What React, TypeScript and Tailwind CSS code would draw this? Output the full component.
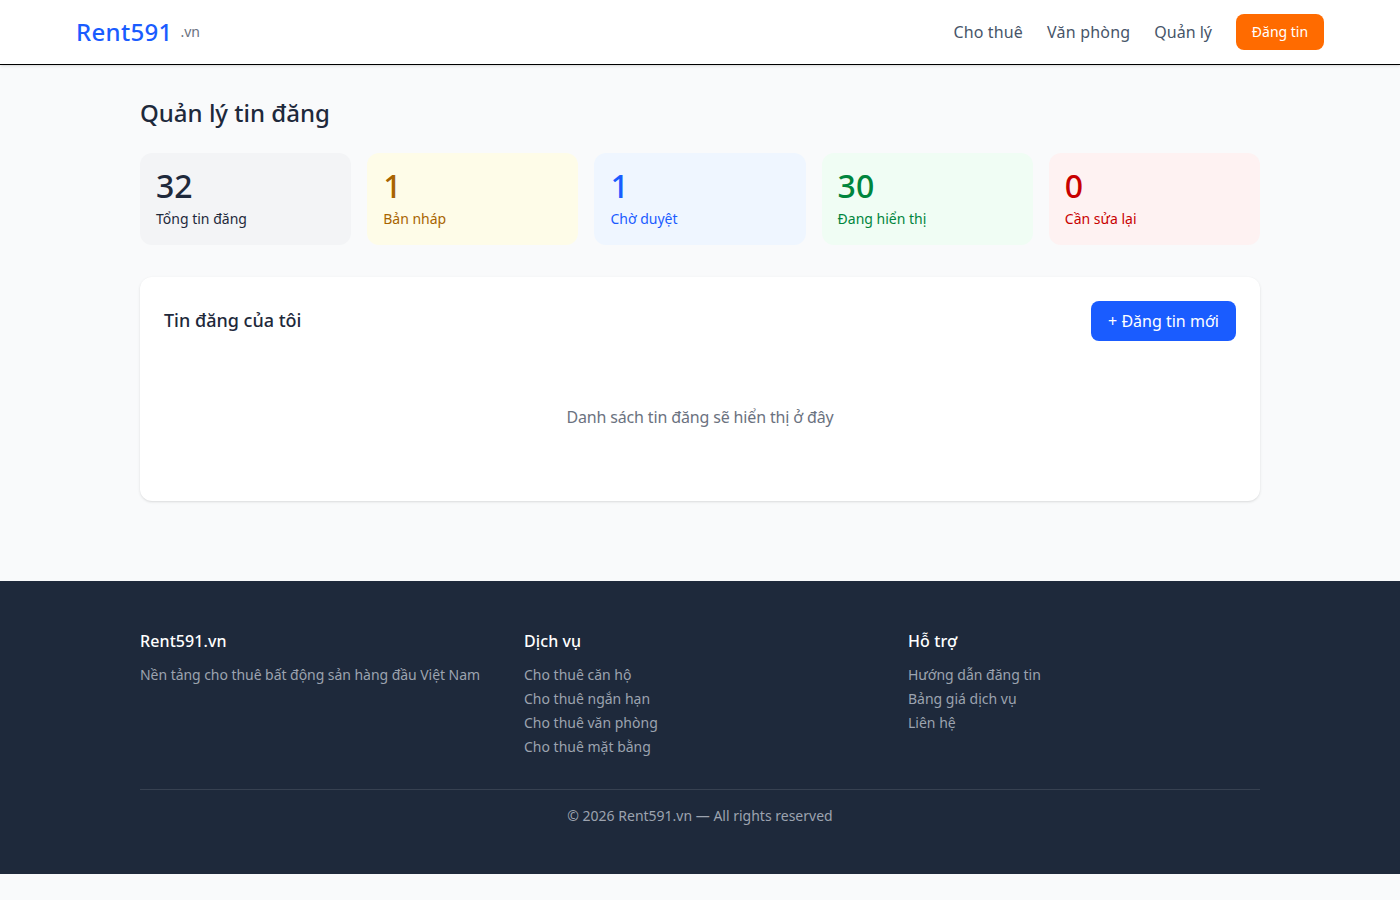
const stats = [
  { value: "32", label: "Tổng tin đăng", box: "bg-[#f3f4f6]", text: "text-[#1e293b]" },
  { value: "1", label: "Bản nháp", box: "bg-[#fefce8]", text: "text-[#a86400]" },
  { value: "1", label: "Chờ duyệt", box: "bg-[#eff6ff]", text: "text-[#1a5cff]" },
  { value: "30", label: "Đang hiển thị", box: "bg-[#f0fdf4]", text: "text-[#00853d]" },
  { value: "0", label: "Cần sửa lại", box: "bg-[#fef2f2]", text: "text-[#c80000]" },
]

const services = ["Cho thuê căn hộ", "Cho thuê ngắn hạn", "Cho thuê văn phòng", "Cho thuê mặt bằng"]
const support = ["Hướng dẫn đăng tin", "Bảng giá dịch vụ", "Liên hệ"]

export default function App() {
  return (
    <div className="min-h-screen bg-[#f9fafb] font-['Noto_Sans',sans-serif] text-[#1e293b]">
      {/* Header */}
      <header className="bg-white border-b border-black shadow-sm">
        <div className="max-w-[1280px] mx-auto h-16 px-4 flex items-center justify-between">
          <a className="flex items-center gap-2">
            <span className="text-2xl font-medium tracking-[0.3px] text-[#1a5cff]">Rent591</span>
            <span className="text-sm text-[#6b7280]">.vn</span>
          </a>
          <nav className="flex items-center gap-6">
            <a className="text-[#475569] tracking-[0.15px]">Cho thuê</a>
            <a className="text-[#475569] tracking-[0.2px]">Văn phòng</a>
            <a className="text-[#475569]">Quản lý</a>
            <a className="w-[88px] py-2 text-center rounded-lg bg-[#ff6b00] text-white text-sm">Đăng tin</a>
          </nav>
        </div>
      </header>

      {/* Content */}
      <main className="max-w-[1120px] mx-auto pt-8 pb-20">
        <h1 className="text-2xl font-medium mb-6">Quản lý tin đăng</h1>

        <div className="grid grid-cols-5 gap-4 mb-8">
          {stats.map((s) => (
            <div key={s.label} className={`rounded-xl p-4 h-[92px] ${s.box} ${s.text}`}>
              <div className="text-[32px] leading-9 -mt-px font-medium">{s.value}</div>
              <div className="text-sm mt-[5px]">{s.label}</div>
            </div>
          ))}
        </div>

        <section className="bg-white rounded-xl shadow-sm p-6 h-[224px]">
          <div className="flex items-center justify-between">
            <h2 className="text-lg font-medium -mt-[2px]">Tin đăng của tôi</h2>
            <button className="h-10 w-[145px] rounded-lg bg-[#1a5cff] text-white">+ Đăng tin mới</button>
          </div>
          <p className="text-center text-[#6b7280] tracking-[-0.15px] mt-16">Danh sách tin đăng sẽ hiển thị ở đây</p>
        </section>
      </main>

      {/* Footer */}
      <footer className="bg-[#1e293b] h-[293px] pt-12">
        <div className="max-w-[1120px] mx-auto">
          <div className="grid grid-cols-3 gap-8">
            <div>
              <h3 className="text-white font-medium tracking-[0.1px] mb-3">Rent591.vn</h3>
              <p className="text-sm text-[#9ca3af] tracking-[-0.05px]">Nền tảng cho thuê bất động sản hàng đầu Việt Nam</p>
            </div>
            <div>
              <h3 className="text-white font-medium tracking-[0.1px] mb-3">Dịch vụ</h3>
              <ul className="flex flex-col gap-1">
                {services.map((t) => (
                  <li key={t} className="text-sm text-[#9ca3af]">{t}</li>
                ))}
              </ul>
            </div>
            <div>
              <h3 className="text-white font-medium tracking-[0.1px] mb-3">Hỗ trợ</h3>
              <ul className="flex flex-col gap-1">
                {support.map((t) => (
                  <li key={t} className="text-sm text-[#9ca3af]">{t}</li>
                ))}
              </ul>
            </div>
          </div>
          <div className="mt-8 pt-4 border-t border-[#374151] text-center text-sm text-[#9ca3af]">
            © 2026 Rent591.vn — All rights reserved
          </div>
        </div>
      </footer>
    </div>
  )
}
